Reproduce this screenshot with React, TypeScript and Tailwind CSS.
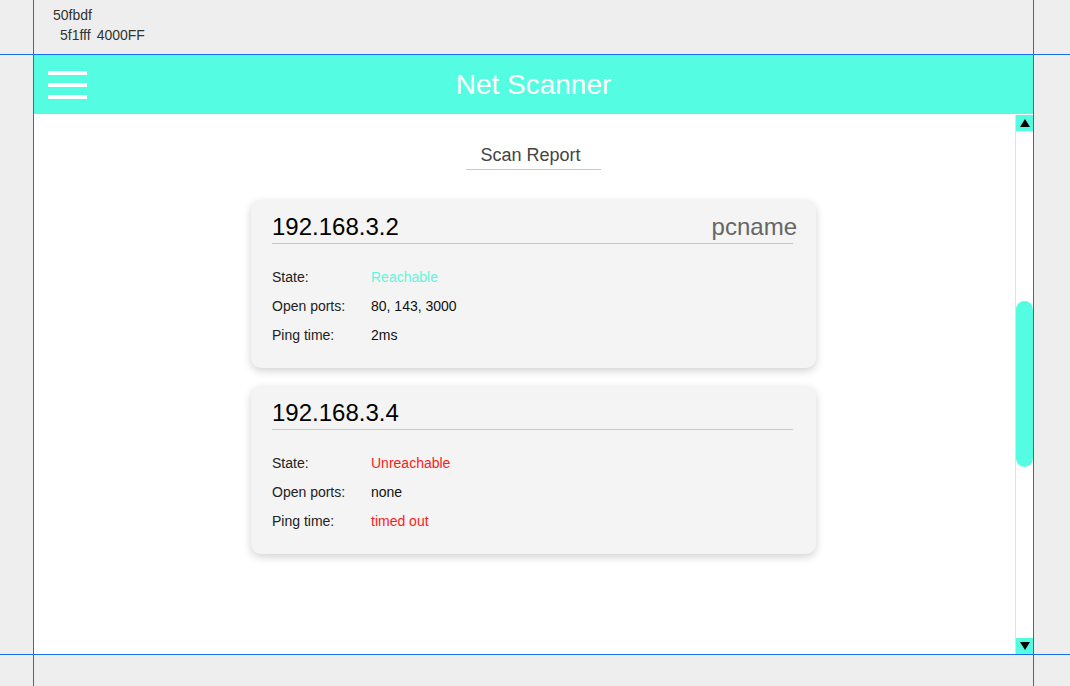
const hosts = [
  {
    ip: "192.168.3.2",
    name: "pcname",
    line: "bg-[#4ffce0]",
    rows: [
      { label: "State:", value: "Reachable", tone: "text-[#5ef7dc]" },
      { label: "Open ports:", value: "80, 143, 3000", tone: "text-[#111]" },
      { label: "Ping time:", value: "2ms", tone: "text-[#111]" },
    ],
  },
  {
    ip: "192.168.3.4",
    name: "",
    line: "bg-[#86e8d8]",
    rows: [
      { label: "State:", value: "Unreachable", tone: "text-[#ff1a1a]" },
      { label: "Open ports:", value: "none", tone: "text-[#111]" },
      { label: "Ping time:", value: "timed out", tone: "text-[#ff1a1a]" },
    ],
  },
];

function HostCard({ host }: { host: (typeof hosts)[number] }) {
  return (
    <div className="w-[565px] rounded-[10px] bg-[#f4f4f4] pt-[11px] pb-[18px] pl-[21px] pr-[19px] shadow-[0_3px_8px_rgba(0,0,0,0.18)]">
      <div className="flex items-end justify-between text-[24px] leading-[32px]">
        <span className="text-black">{host.ip}</span>
        <span className="text-[#666]">{host.name}</span>
      </div>
      <div className={"mr-[4px] h-px " + host.line} />
      <div className="mt-[19px] text-[14px]">
        {host.rows.map((row) => (
          <div key={row.label} className="flex h-[29px] items-center">
            <span className="w-[99px] text-[#222]">{row.label}</span>
            <span className={row.tone}>{row.value}</span>
          </div>
        ))}
      </div>
    </div>
  );
}

export default function App() {
  return (
    <div className="relative h-[686px] w-full overflow-hidden bg-[#eeeeee] font-['Liberation_Sans',Arial,sans-serif]">
      <div className="h-[54px] pl-[53px] pt-[5px] text-[14px] leading-[20px] text-[#333]">
        <div>50fbdf</div>
        <div className="pl-[7px]">
          5f1fff<span className="ml-[6px]">4000FF</span>
        </div>
      </div>

      <div className="relative ml-[34px] mt-px flex h-[599px] w-[999px] flex-col bg-white">
        <header className="grid h-[59px] shrink-0 grid-cols-[1fr_auto_1fr] items-center bg-[#54fde1]">
          <div className="flex flex-col gap-[8px] pl-[14px]">
            <span className="h-[4px] w-[39px] bg-white" />
            <span className="h-[4px] w-[39px] bg-white" />
            <span className="h-[4px] w-[39px] bg-white" />
          </div>
          <h1 className="text-[28px] leading-[32px] text-white">Net Scanner</h1>
          <div />
        </header>

        <main className="relative flex flex-1 flex-col items-center">
          <div className="mt-[29px] flex flex-col items-stretch">
            <h2 className="pl-[14px] pr-[20px] pb-[2px] text-[18px] leading-[24px] text-[#444]">
              Scan Report
            </h2>
            <div className="h-px bg-[#54fde1]" />
          </div>
          <div className="mt-[30px] flex flex-col gap-[18px]">
            {hosts.map((h) => (
              <HostCard key={h.ip} host={h} />
            ))}
          </div>

          <div className="absolute right-0 top-px bottom-0 flex w-[18px] flex-col border-l border-[#e2e2e2] bg-white">
            <div className="flex h-[16px] items-center justify-center bg-[#54fde1]">
              <svg width="10" height="8" viewBox="0 0 10 8">
                <path d="M5 0 L10 8 L0 8 Z" fill="#000" />
              </svg>
            </div>
            <div className="flex-1">
              <div className="mt-[170px] h-[166px] w-[17px] rounded-full bg-[#54fde1]" />
            </div>
            <div className="flex h-[16px] items-center justify-center bg-[#54fde1]">
              <svg width="10" height="8" viewBox="0 0 10 8">
                <path d="M0 0 L10 0 L5 8 Z" fill="#000" />
              </svg>
            </div>
          </div>
        </main>
      </div>

      <div className="pointer-events-none absolute left-[33px] top-0 h-full w-px bg-[#1a6cf0]" />
      <div className="pointer-events-none absolute left-[1033px] top-0 h-full w-px bg-[#1a6cf0]" />
      <div className="pointer-events-none absolute left-0 top-[54px] h-px w-full bg-[#1a6cf0]" />
      <div className="pointer-events-none absolute left-0 top-[654px] h-px w-full bg-[#1a6cf0]" />
    </div>
  );
}
